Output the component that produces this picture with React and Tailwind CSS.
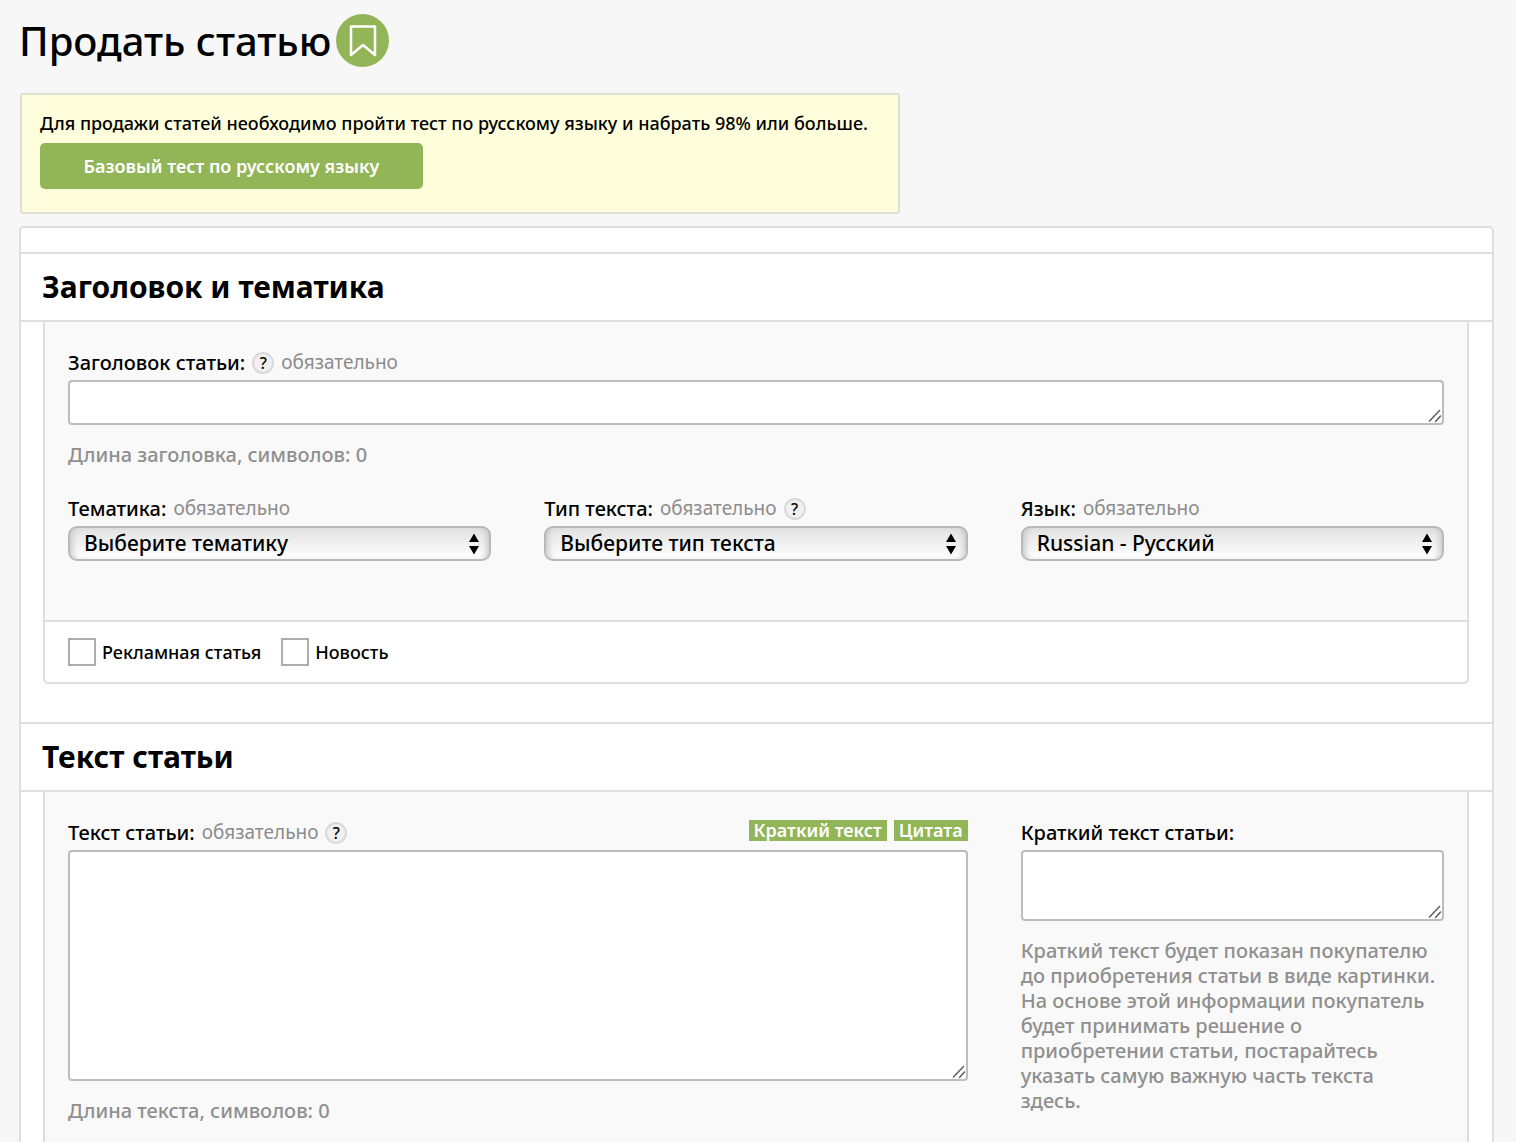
import { useState } from "react";

const LINE = "border-[#dedede]";

function Help({ label }) {
  return (
    <button
      type="button"
      aria-label={label}
      className="flex size-[22px] shrink-0 items-center justify-center rounded-full border-2 border-[#d9d9d9] bg-[#f0f0f0] text-[16px] leading-none font-medium text-black"
    >
      ?
    </button>
  );
}

function Required() {
  return <span className="text-[19px] text-[#8c8c8c]">обязательно</span>;
}

function Label({ htmlFor, children }) {
  return (
    <label htmlFor={htmlFor} className="text-[20px] font-medium text-black">
      {children}
    </label>
  );
}

function FieldHead({ children }) {
  return <div className="flex h-[32px] items-center gap-[7px] pb-[3px]">{children}</div>;
}

function Area({ id, value, onChange, className }) {
  return (
    <div className="relative">
      <textarea
        id={id}
        value={value}
        onChange={onChange}
        className={
          "block w-full resize-none rounded-[4px] border-2 border-[#bdbdbd] bg-white px-3 py-1 text-[20px] outline-none " +
          className
        }
      />
      <svg
        viewBox="0 0 14 14"
        className="pointer-events-none absolute right-[2px] bottom-[2px] size-[14px]"
        stroke="#5c5c5c"
        strokeWidth="1.5"
        strokeLinecap="round"
        aria-hidden="true"
      >
        <path d="M1.5 12 L11.5 1.5 M7.5 12.5 L12.5 7" />
      </svg>
    </div>
  );
}

function Select({ id, options }) {
  return (
    <div className="relative">
      <select
        id={id}
        className="block h-[35px] w-full appearance-none rounded-[9px] border-2 border-[#b9b9b9] bg-linear-to-b from-[#e2e2e2] to-white pr-10 pb-[2px] pl-[14px] text-[21px] leading-[28px] font-medium text-black shadow-[inset_6px_0_6px_-4px_#c4c4c4,inset_-6px_0_6px_-4px_#c4c4c4] outline-none"
      >
        {options.map((o) => (
          <option key={o}>{o}</option>
        ))}
      </select>
      <svg
        viewBox="0 0 12 22"
        className="pointer-events-none absolute top-[7px] right-[11px] h-[22px] w-[12px]"
        aria-hidden="true"
      >
        <path d="M6 .5 L11 9 H1 Z M1 13 H11 L6 21.500 Z" />
      </svg>
    </div>
  );
}

function SectionTitle({ children }) {
  return (
    <h2 className={"border-y-2 px-[21px] pt-[11px] pb-[11px] text-[30px] leading-[44px] font-bold text-black " + LINE}>
      {children}
    </h2>
  );
}

function Check({ children }) {
  return (
    <label className="flex items-center gap-[6px] text-[18px] font-medium text-black">
      <input
        type="checkbox"
        className="size-[28px] appearance-none border-2 border-[#adadad] bg-white checked:bg-[#92b558]"
      />
      {children}
    </label>
  );
}

export default function App() {
  const [title, setTitle] = useState("");
  const [text, setText] = useState("");
  const [brief, setBrief] = useState("");

  return (
    <main className="h-screen overflow-hidden bg-[#f7f7f7] px-[20px] pt-[14px] font-['Trebuchet_MS','Noto_Sans',sans-serif] text-black">
      <header className="-ml-px flex items-center gap-[5px]">
        <h1 className="text-[40px] leading-[53px] font-medium">Продать статью</h1>
        <button
          type="button"
          aria-label="Добавить в закладки"
          className="flex size-[53px] items-center justify-center rounded-full bg-[#92b558]"
        >
          <svg viewBox="0 0 28 32" className="h-[32px] w-[28px]" fill="none" stroke="#fff" strokeWidth="2.500" strokeLinejoin="round" aria-hidden="true">
            <path d="M2 1.500 H26 V30 L14 20 L2 30 Z" />
          </svg>
        </button>
      </header>

      <section className="mt-[26px] w-[880px] max-w-full rounded-[3px] border-2 border-[#dfe0d2] bg-[#fefedd] px-[18px] pt-[14px] pb-[23px]">
        <p className="text-[18px] leading-[28px] font-medium">
          Для продажи статей необходимо пройти тест по русскому языку и набрать 98% или больше.
        </p>
        <button
          type="button"
          className="mt-[6px] block h-[46px] w-[383px] rounded-[5px] bg-[#92b558] text-[18px] font-semibold text-white"
        >
          Базовый тест по русскому языку
        </button>
      </section>

      <form className={"mt-[12px] -ml-px mr-[2px] rounded-[5px] border-2 bg-white pt-[24px] " + LINE}>
        <SectionTitle>Заголовок и тематика</SectionTitle>
        <div className={"mr-[23px] mb-[38px] ml-[22px] rounded-b-[5px] border-2 border-t-0 bg-white " + LINE}>
          <div className={"border-b-2 bg-[#f9f9f9] px-[23px] pt-[26px] pb-[59px] " + LINE}>
            <FieldHead>
              <Label htmlFor="title">Заголовок статьи:</Label>
              <Help label="Подсказка: заголовок статьи" />
              <Required />
            </FieldHead>
            <Area id="title" value={title} onChange={(e) => setTitle(e.target.value)} className="h-[45px]" />
            <p className="mt-[16px] text-[20px] leading-[28px] font-medium text-[#8f8f8f]">
              Длина заголовка, символов: {title.length}
            </p>
            <div className="mt-[25px] grid grid-cols-3 gap-[53px]">
              <div>
                <FieldHead>
                  <Label htmlFor="topic">Тематика:</Label>
                  <Required />
                </FieldHead>
                <Select id="topic" options={["Выберите тематику"]} />
              </div>
              <div>
                <FieldHead>
                  <Label htmlFor="kind">Тип текста:</Label>
                  <Required />
                  <Help label="Подсказка: тип текста" />
                </FieldHead>
                <Select id="kind" options={["Выберите тип текста"]} />
              </div>
              <div>
                <FieldHead>
                  <Label htmlFor="lang">Язык:</Label>
                  <Required />
                </FieldHead>
                <Select id="lang" options={["Russian - Русский"]} />
              </div>
            </div>
          </div>
          <div className="flex h-[60px] items-center gap-[20px] px-[23px]">
            <Check>Рекламная статья</Check>
            <Check>Новость</Check>
          </div>
        </div>

        <SectionTitle>Текст статьи</SectionTitle>
        <div className={"mr-[23px] ml-[22px] grid grid-cols-3 gap-[53px] border-x-2 bg-[#f9f9f9] px-[23px] pt-[26px] pb-[60px] " + LINE}>
          <div className="col-span-2">
            <FieldHead>
              <Label htmlFor="text">Текст статьи:</Label>
              <Required />
              <Help label="Подсказка: текст статьи" />
              <div className="ml-auto flex gap-[7px] pb-[4px] text-[18px] leading-[21px] font-semibold text-white">
                <button type="button" className="bg-[#92b558] px-[5px]">Краткий текст</button>
                <button type="button" className="bg-[#92b558] px-[5px]">Цитата</button>
              </div>
            </FieldHead>
            <Area id="text" value={text} onChange={(e) => setText(e.target.value)} className="h-[231px]" />
            <p className="mt-[16px] text-[20px] leading-[28px] font-medium text-[#8f8f8f]">
              Длина текста, символов: {text.length}
            </p>
          </div>
          <div>
            <FieldHead>
              <Label htmlFor="brief">Краткий текст статьи:</Label>
            </FieldHead>
            <Area id="brief" value={brief} onChange={(e) => setBrief(e.target.value)} className="h-[71px]" />
            <p className="mt-[17px] pr-[6px] text-[20px] leading-[25px] font-medium text-[#8f8f8f]">
              Краткий текст будет показан покупателю до приобретения статьи в виде картинки. На основе этой
              информации покупатель будет принимать решение о приобретении статьи, постарайтесь указать самую
              важную часть текста здесь.
            </p>
          </div>
        </div>
      </form>
    </main>
  );
}
